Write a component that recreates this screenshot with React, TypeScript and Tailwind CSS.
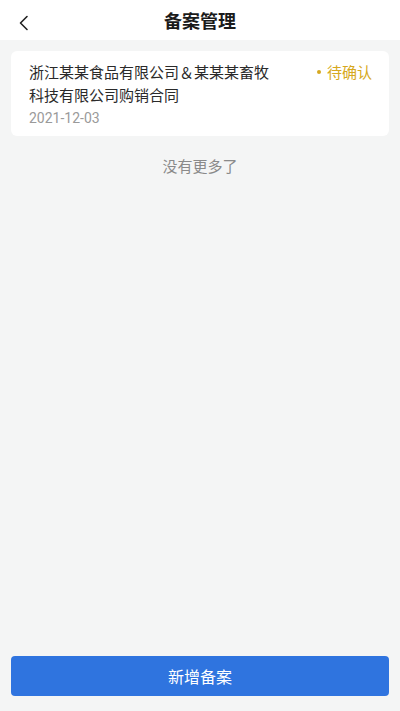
import React from "react";

const font = {
  fontFamily: '"Noto Sans CJK SC", "Noto Sans", sans-serif',
};

const App: React.FC = () => {
  return (
    <div
      className="flex min-h-[711px] w-[400px] flex-col bg-[#f4f5f5]"
      style={font}
    >
      <div className="relative flex h-10 items-center justify-center bg-white">
        <button className="absolute left-[14px] top-[11px] p-1">
          <svg width="12" height="16" viewBox="0 0 12 16" fill="none">
            <path
              d="M9 1.5L2.5 8L9 14.5"
              stroke="#222"
              strokeWidth="1.6"
              strokeLinecap="round"
              strokeLinejoin="round"
            />
          </svg>
        </button>
        <div className="text-[18px] font-semibold text-[#1a1a1a]">备案管理</div>
      </div>

      <div className="mx-[11px] mt-[11px] rounded-md bg-white pb-[7px] pl-[18px] pr-[17px] pt-[9px]">
        <div className="flex items-start justify-between">
          <div className="w-[248px] text-[15px] leading-[23px] text-[#2a2a2a]">
            浙江某某食品有限公司＆某某某畜牧科技有限公司购销合同
          </div>
          <div className="flex items-center gap-[6px] text-[15px] leading-[23px] text-[#d6a820]">
            <span className="h-[4px] w-[4px] rounded-full bg-[#d6a820]" />
            待确认
          </div>
        </div>
        <div
          className="mt-[1px] text-[14px] leading-[22px] text-[#9a9a9a]"
          style={{ fontFamily: '"Roboto", "Noto Sans", sans-serif' }}
        >
          2021-12-03
        </div>
      </div>

      <div className="mt-[19px] text-center text-[15px] text-[#8a8a8a]">
        没有更多了
      </div>

      <div className="flex-1" />

      <div className="px-[11px] pb-[15px]">
        <button className="flex h-10 w-full items-center justify-center rounded-[4px] bg-[#2f74df] text-[16px] text-white">
          新增备案
        </button>
      </div>
    </div>
  );
};

export default App;
